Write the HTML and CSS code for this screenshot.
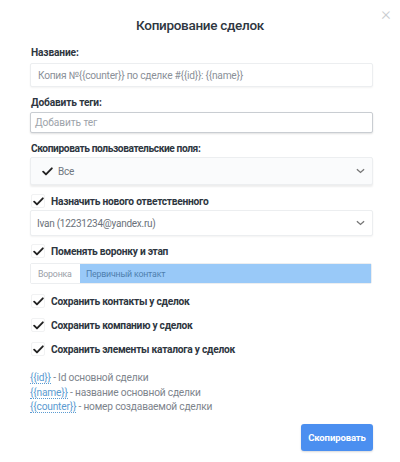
FILE: index.html
```html
<!DOCTYPE html>
<html lang="ru">
<head>
<meta charset="utf-8">
<link rel="stylesheet" href="styles.css">
</head>
<body>
<div class="modal">
  <div class="header">
    <h1 class="title">Копирование сделок</h1>
    <span class="close">×</span>
  </div>
  <div class="form">
    <div class="label l1">Название:</div>
    <div class="input name-input">Копия №{{counter}} по сделке #{{id}}: {{name}}</div>

    <div class="label l2">Добавить теги:</div>
    <div class="input tag-input">Добавить тег</div>

    <div class="label l3">Скопировать пользовательские поля:</div>
    <div class="select sel1">
      <span class="sel-check"><svg viewBox="0 0 12 10" width="11" height="9"><path d="M1.2 5.2 L4.3 8.2 L10.8 1.5" fill="none" stroke="#222" stroke-width="2.1" stroke-linecap="round" stroke-linejoin="round"/></svg></span>
      <span class="sel-text">Все</span>
      <span class="chev"><svg viewBox="0 0 10 6" width="9" height="6"><path d="M1 1 L5 4.6 L9 1" fill="none" stroke="#777" stroke-width="1.5"/></svg></span>
    </div>

    <div class="check-row cr1">
      <span class="box"><svg viewBox="0 0 12 10" width="11" height="9"><path d="M1.2 5.2 L4.3 8.2 L10.8 1.5" fill="none" stroke="#222" stroke-width="2.1" stroke-linecap="round" stroke-linejoin="round"/></svg></span>
      <span class="check-text">Назначить нового ответственного</span>
    </div>
    <div class="select sel2">
      <span class="sel-text user">Ivan (12231234@yandex.ru)</span>
      <span class="chev"><svg viewBox="0 0 10 6" width="9" height="6"><path d="M1 1 L5 4.6 L9 1" fill="none" stroke="#777" stroke-width="1.5"/></svg></span>
    </div>

    <div class="check-row cr2">
      <span class="box"><svg viewBox="0 0 12 10" width="11" height="9"><path d="M1.2 5.2 L4.3 8.2 L10.8 1.5" fill="none" stroke="#222" stroke-width="2.1" stroke-linecap="round" stroke-linejoin="round"/></svg></span>
      <span class="check-text">Поменять воронку и этап</span>
    </div>
    <div class="pipeline">
      <span class="pipe-label">Воронка</span>
      <span class="pipe-stage">Первичный контакт</span>
    </div>

    <div class="check-row cr3">
      <span class="box"><svg viewBox="0 0 12 10" width="11" height="9"><path d="M1.2 5.2 L4.3 8.2 L10.8 1.5" fill="none" stroke="#222" stroke-width="2.1" stroke-linecap="round" stroke-linejoin="round"/></svg></span>
      <span class="check-text">Сохранить контакты у сделок</span>
    </div>
    <div class="check-row cr4">
      <span class="box"><svg viewBox="0 0 12 10" width="11" height="9"><path d="M1.2 5.2 L4.3 8.2 L10.8 1.5" fill="none" stroke="#222" stroke-width="2.1" stroke-linecap="round" stroke-linejoin="round"/></svg></span>
      <span class="check-text">Сохранить компанию у сделок</span>
    </div>
    <div class="check-row cr4">
      <span class="box"><svg viewBox="0 0 12 10" width="11" height="9"><path d="M1.2 5.2 L4.3 8.2 L10.8 1.5" fill="none" stroke="#222" stroke-width="2.1" stroke-linecap="round" stroke-linejoin="round"/></svg></span>
      <span class="check-text">Сохранить элементы каталога у сделок</span>
    </div>

    <div class="legend">
      <div><span class="var">{{id}}</span> - Id основной сделки</div>
      <div><span class="var">{{name}}</span> - название основной сделки</div>
      <div><span class="var">{{counter}}</span> - номер создаваемой сделки</div>
    </div>

    <div class="actions">
      <button class="btn">Скопировать</button>
    </div>
  </div>
</div>
</body>
</html>
```

FILE: styles.css
```css
html, body {
  margin: 0;
  padding: 0;
  background: #ffffff;
}
body {
  font-family: Roboto, "Open Sans", sans-serif;
  color: #313942;
  width: 400px;
  height: 462px;
  overflow: hidden;
}
.modal {
  position: relative;
  width: 400px;
}
.header {
  box-sizing: border-box;
  height: 46px;
  padding-top: 3px;
  display: flex;
  align-items: center;
  justify-content: center;
}
.title {
  margin: 0;
  font-size: 13.5px;
  letter-spacing: -0.3px;
  font-weight: 500;
  color: #2e3640;
  line-height: 20px;
}
.close {
  position: absolute;
  top: 4px;
  right: 9px;
  font-size: 19px;
  line-height: 20px;
  color: #c9ccd0;
  font-weight: 300;
}
.form {
  padding: 0 27px 0 30px;
}
.label {
  font-size: 10.2px;
  letter-spacing: -0.15px;
  font-weight: 700;
  line-height: 14px;
  color: #2e3640;
  padding-left: 1px;
}
.l1 { margin-bottom: 3px; }
.l2 { margin-top: 9px; margin-bottom: 2px; }
.l3 { margin-top: 9px; margin-bottom: 1px; letter-spacing: -0.4px; }
.input {
  box-sizing: border-box;
  border: 1px solid #eceef0;
  border-radius: 2px;
  background: #fff;
  font-size: 10.2px;
  letter-spacing: -0.25px;
  color: #8a9098;
  display: flex;
  align-items: center;
}
.name-input {
  height: 24px;
  padding-left: 7px;
  box-shadow: 0 1px 2px rgba(0,0,0,0.05);
}
.tag-input {
  height: 21px;
  padding-left: 4px;
  border-color: #c9cdd2;
  box-shadow: 0 1px 2px rgba(0,0,0,0.12);
  color: #9da3aa;
  letter-spacing: -0.1px;
}
.select {
  box-sizing: border-box;
  border: 1px solid #eceef0;
  border-radius: 2px;
  display: flex;
  align-items: center;
  font-size: 10px;
  letter-spacing: -0.25px;
  color: #5d646c;
}
.sel1 {
  height: 28px;
  background: #fafbfc;
  box-shadow: 0 2px 2px rgba(0,0,0,0.07);
  padding-left: 11px;
}
.sel2 {
  height: 26px;
  background: #fff;
  box-shadow: 0 1px 2px rgba(0,0,0,0.05);
  padding-left: 6px;
}
.sel-check {
  display: flex;
  align-items: center;
  width: 16px;
}
.sel-text {
  flex: 1;
  color: #707780;
}
.sel-text.user { color: #6a7179; }
.chev {
  display: flex;
  align-items: center;
  padding-right: 7px;
}
.check-row {
  display: flex;
  align-items: center;
  height: 16px;
}
.box {
  box-sizing: border-box;
  width: 14px;
  height: 14px;
  border: 1px solid #f1f2f3;
  border-radius: 2px;
  display: flex;
  align-items: center;
  justify-content: center;
  margin-right: 6px;
  margin-left: 1px;
}
.check-text {
  font-size: 10.2px;
  letter-spacing: -0.25px;
  font-weight: 700;
  color: #2e3640;
}
.cr1 { margin-top: 8px; margin-bottom: 1px; }
.cr2 { margin-top: 7px; margin-bottom: 4px; }
.cr3 { margin-top: 9px; }
.cr4 { margin-top: 8px; }
.pipeline {
  box-sizing: border-box;
  height: 21px;
  display: flex;
  border: 1px solid #eceef0;
  border-radius: 2px;
  font-size: 8.8px;
  letter-spacing: -0.2px;
  margin-right: 1px;
}
.pipe-label {
  width: 49px;
  display: flex;
  align-items: center;
  padding-left: 7px;
  box-sizing: border-box;
  color: #9aa0a7;
  background: #fff;
}
.pipe-stage {
  flex: 1;
  background: #99c9f8;
  color: #4f7fae;
  display: flex;
  align-items: center;
  padding-left: 6px;
}
.legend {
  margin-top: 14px;
  font-size: 10.2px;
  letter-spacing: -0.2px;
  line-height: 14.5px;
  color: #7d848c;
}
.var {
  color: #5b9bd1;
  border-bottom: 1px dotted #5b9bd1;
}
.actions {
  display: flex;
  justify-content: flex-end;
  margin-top: 9px;
}
.btn {
  width: 72px;
  height: 27px;
  border: none;
  border-radius: 3px;
  background: #4b8ff0;
  color: #fff;
  font-family: Roboto, "Open Sans", sans-serif;
  font-size: 9.5px;
  letter-spacing: -0.1px;
  font-weight: 700;
  padding: 0;
  box-shadow: 0 1px 2px rgba(0,0,0,0.15);
}
```
